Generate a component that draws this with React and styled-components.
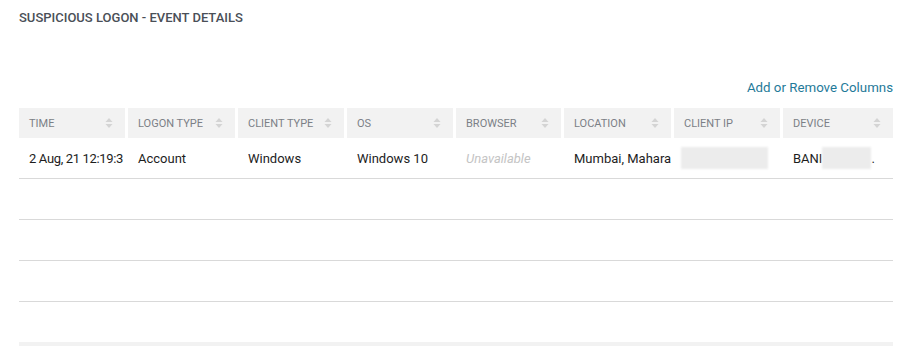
import styled, { createGlobalStyle } from "styled-components";

const GlobalStyle = createGlobalStyle`
  body {
    margin: 0;
    background: #fff;
    font-family: Roboto, "Liberation Sans", Arial, sans-serif;
  }
`;

const Page = styled.div`
  padding: 11px 16px 0 19px;
  display: flex;
  flex-direction: column;
`;

const Title = styled.h2`
  margin: 0;
  font-size: 13px;
  font-weight: 500;
  color: #4a4f57;
  line-height: 14px;
`;

const Toolbar = styled.div`
  display: flex;
  justify-content: flex-end;
  margin-top: 52px;
  height: 20px;
`;

const LinkButton = styled.button`
  background: none;
  border: none;
  padding: 0;
  font-family: inherit;
  font-size: 13.3px;
  color: #1f7a99;
  cursor: pointer;
`;

const Table = styled.div`
  margin-top: 11px;
  display: flex;
  flex-direction: column;
`;

const cols = "106px 107px 106px 106px 105px 107px 106px 1fr";

const HeadRow = styled.div`
  display: grid;
  grid-template-columns: ${cols};
  column-gap: 3px;
  height: 30px;
`;

const HeadCell = styled.div`
  background: #f2f2f2;
  display: flex;
  align-items: center;
  justify-content: space-between;
  padding: 0 12px 0 10px;
  font-size: 11px;
  color: #7b7f86;
  text-transform: uppercase;
  white-space: nowrap;
`;

const Row = styled.div`
  display: grid;
  grid-template-columns: ${cols};
  column-gap: 3px;
  height: 40px;
  border-bottom: 1px solid #d9d9d9;
`;

const Cell = styled.div`
  display: flex;
  align-items: center;
  padding-left: ${(p) => (p.$tight ? "7px" : "10px")};
  font-size: 13px;
  letter-spacing: ${(p) => (p.$condensed ? "-0.35px" : "normal")};
  color: ${(p) => (p.$muted ? "#c4c4c4" : "#1d1d1d")};
  font-style: ${(p) => (p.$muted ? "italic" : "normal")};
  white-space: nowrap;
  overflow: hidden;
`;

const Blur = styled.span`
  display: inline-block;
  width: ${(p) => p.$w}px;
  height: 22px;
  background: #ececec;
  filter: blur(1px);
`;

const BottomBar = styled.div`
  margin-top: 40px;
  height: 4px;
  background: #f2f2f2;
`;

const SortIcon = () => (
  <svg width="8" height="12" viewBox="0 0 8 12">
    <path d="M4 1 L7.5 5 H0.5 Z" fill="#d4d4d4" />
    <path d="M4 11 L7.5 7 H0.5 Z" fill="#d4d4d4" />
  </svg>
);

const columns = [
  "Time",
  "Logon Type",
  "Client Type",
  "OS",
  "Browser",
  "Location",
  "Client IP",
  "Device",
];

export default function App() {
  return (
    <>
      <GlobalStyle />
      <Page>
        <Title>SUSPICIOUS LOGON - EVENT DETAILS</Title>
        <Toolbar>
          <LinkButton>Add or Remove Columns</LinkButton>
        </Toolbar>
        <Table>
          <HeadRow>
            {columns.map((c) => (
              <HeadCell key={c}>
                {c}
                <SortIcon />
              </HeadCell>
            ))}
          </HeadRow>
          <Row>
            <Cell $condensed>2 Aug, 21 12:19:3</Cell>
            <Cell>Account</Cell>
            <Cell>Windows</Cell>
            <Cell>Windows 10</Cell>
            <Cell $muted>Unavailable</Cell>
            <Cell>Mumbai, Mahara</Cell>
            <Cell $tight>
              <Blur $w={87} />
            </Cell>
            <Cell>
              BANI
              <Blur $w={49} />.
            </Cell>
          </Row>
          <Row />
          <Row />
          <Row />
          <BottomBar />
        </Table>
      </Page>
    </>
  );
}
